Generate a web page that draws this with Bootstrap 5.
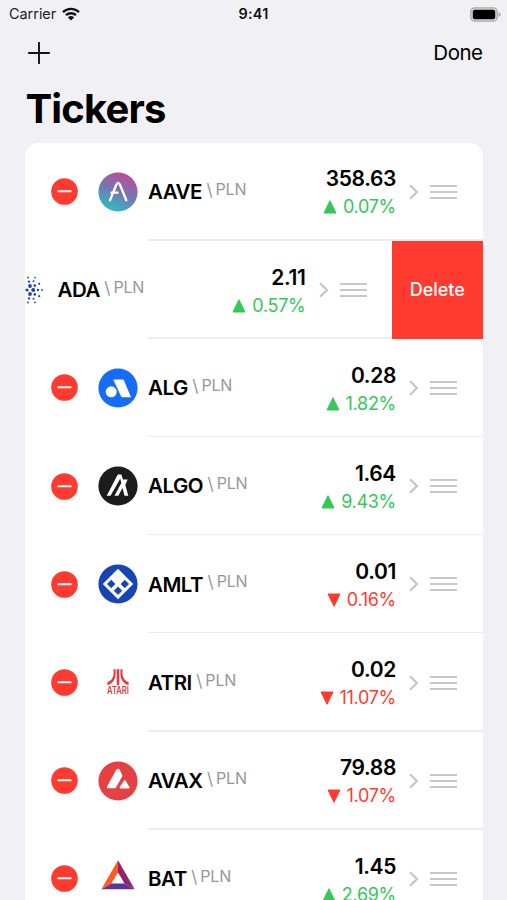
<!DOCTYPE html>
<html lang="en">
<head>
<meta charset="utf-8">
<meta name="viewport" content="width=device-width, initial-scale=1">
<title>Tickers</title>
<link href="https://cdn.jsdelivr.net/npm/bootstrap@5.3.0/dist/css/bootstrap.min.css" rel="stylesheet">
<style>
  body { background: #f1f0f5; font-family: Inter, "Liberation Sans", sans-serif; color: #000; height: 900px; }
  .status { height: 28px; padding: 0 6px 0 9px; font-size: 14.4px; color: #222; }
  .status > div { flex: 1 1 0; }
  .clock { font-weight: 600; color: #111; letter-spacing: .3px; margin-right: 3px; }
  .wifi { margin-left: 6px; }
  .tools { height: 50px; padding: 0 24.5px 0 28px; font-size: 20.5px; letter-spacing: -.5px; }
  .title { font-size: 40px; font-weight: 700; line-height: 48px; height: 64.5px; padding: 7px 0 0 25.5px; letter-spacing: -.85px; margin: 0; }
  .sheet { margin: 0 24.5px 0 25px; border-radius: 13px 13px 0 0; height: 757.5px; }
  .ticker { height: 98.2px; padding: 0 25.5px 0 26px; position: relative; }
  .ticker::after { content: ""; position: absolute; left: 123px; right: 0; bottom: 0; height: 1.4px; background: #ededef; }
  .swiped { padding: 0; }
  .swiped .slide { margin-left: -64.5px; width: 431.5px; flex: none; padding-right: 25.5px; }
  .ico-remove { width: 27px; height: 27px; margin-right: 20px; }
  .ico-coin { width: 40px; height: 40px; margin-right: 10px; }
  .code { font-size: 20.5px; font-weight: 600; line-height: 26px; letter-spacing: -.5px; padding-top: .5px; }
  .slash { font-size: 17px; line-height: 26px; color: #97979b; margin: -4px 0 0 4.5px; }
  .pair { font-size: 16px; line-height: 26px; color: #97979b; margin: -6px 0 0 3px; letter-spacing: -.2px; }
  .quote { padding-top: 3.5px; }
  .price { font-size: 21px; font-weight: 600; line-height: 28px; letter-spacing: -.35px; }
  .change { font-size: 18px; line-height: 28px; letter-spacing: -.3px; }
  .up { color: #34c759; } .down { color: #ff3b30; }
  .ico-tri { width: 14px; height: 14px; margin-right: 6px; }
  .ico-chev { width: 11px; height: 16px; margin: 0 11px 0 12px; }
  .ico-grip { width: 27px; height: 16px; }
  .swipe-delete { background: #ff3b30; color: #fff; width: 90.5px; font-size: 18px; font-weight: 500; border: 0; z-index: 1; }
  svg { flex: none; display: block; }
</style>
</head>
<body class="overflow-hidden">
<svg width="0" height="0" class="position-absolute">
  <defs>
    <linearGradient id="g" x1=".7" y1="0" x2=".3" y2="1"><stop offset=".08" stop-color="#b44f9b"/><stop offset=".5" stop-color="#7577b2"/><stop offset=".95" stop-color="#30b9c4"/></linearGradient>
    <symbol id="remove" viewBox="0 0 27 27"><circle cx="13.5" cy="13.5" r="13.3" fill="#ff3b30"/><path d="M7.2 13.3h12.6" stroke="#fff" stroke-width="2" stroke-linecap="round"/></symbol>
    <symbol id="up" viewBox="0 0 14 14"><path d="M7 .7 13 13H1z" fill="#34c759" stroke="#34c759" stroke-linejoin="round"/></symbol>
    <symbol id="down" viewBox="0 0 14 14"><path d="M7 13.3 13 1H1z" fill="#ff3b30" stroke="#ff3b30" stroke-linejoin="round"/></symbol>
    <symbol id="chev" viewBox="0 0 11 16"><path d="m2 1.3 7 6.7-7 6.7" fill="none" stroke="#c4c4c6" stroke-width="2.1"/></symbol>
    <symbol id="grip" viewBox="0 0 27 16"><path d="M0 2h27M0 8h27M0 14h27" stroke="#c8c8ca" stroke-width="1.9"/></symbol>
  </defs>
</svg>

<header>
  <div class="status d-flex align-items-center">
    <div class="d-flex align-items-center"><span>Carrier</span>
      <svg class="wifi" width="18" height="14" viewBox="0 0 18 14" fill="none" stroke="#111"><path d="M1 5.1a11.6 11.6 0 0 1 16 0M4 8.2a7.3 7.3 0 0 1 10 0" stroke-width="2.4"/><path d="M5.9 10.5a4.5 4.5 0 0 1 6.2 0L9 13.6z" fill="#111" stroke="none"/></svg>
    </div>
    <span class="clock">9:41</span>
    <div class="d-flex justify-content-end">
      <svg width="31" height="15" viewBox="0 0 31 15"><rect x=".8" y=".8" width="26.4" height="13.4" rx="4" fill="#d8d8da" stroke="#aaaaad" stroke-width="1.3"/><rect x="2.8" y="2.8" width="22.4" height="9.4" rx="2" fill="#000"/><path d="M28.5 5.2q2.2.6 2.2 2.3t-2.2 2.3z" fill="#aaaaad"/></svg>
    </div>
  </div>
  <div class="tools d-flex align-items-center justify-content-between">
    <svg width="22" height="22" viewBox="0 0 22 22"><path d="M11 .8v20.4M.8 11h20.4" stroke="#111" stroke-width="1.9" stroke-linecap="round"/></svg>
    <span>Done</span>
  </div>
  <h1 class="title">Tickers</h1>
</header>

<main class="sheet bg-white overflow-hidden">
  <div class="ticker d-flex align-items-center">
    <svg class="ico-remove"><use href="#remove"/></svg>
    <svg class="ico-coin" viewBox="0 0 40 40"><circle cx="20" cy="20" r="19.6" fill="url(#g)"/><path d="M12 28.3 18.3 12.8q1.9-4 3.7 0l6.3 15.5M13.4 20.7h6.2" fill="none" stroke="#fff" stroke-width="2.3" stroke-linecap="round"/></svg>
    <span class="code">AAVE</span><span class="slash">\</span><span class="pair">PLN</span>
    <div class="quote ms-auto"><div class="price text-end">358.63</div><div class="change up d-flex align-items-center justify-content-end"><svg class="ico-tri"><use href="#up"/></svg>0.07%</div></div>
    <svg class="ico-chev"><use href="#chev"/></svg><svg class="ico-grip"><use href="#grip"/></svg>
  </div>

  <div class="ticker swiped d-flex align-items-stretch">
    <div class="slide d-flex align-items-center">
      <svg class="ico-remove invisible"></svg>
      <svg class="ico-coin" viewBox="0 0 40 40" fill="#1d43b0"><circle cx="22" cy="16" r="1.9"/><circle cx="25.2" cy="20" r="2"/><circle cx="22" cy="24" r="1.9"/><circle cx="19" cy="20" r="1.6"/><circle cx="26.8" cy="15.6" r="1.3"/><circle cx="26.8" cy="24.4" r="1.3"/><circle cx="21" cy="11.6" r="1.2"/><circle cx="21" cy="28.4" r="1.2"/><circle cx="30" cy="20" r="1.2"/><circle cx="25.5" cy="11.2" r="1"/><circle cx="25.5" cy="28.8" r="1"/><circle cx="31.2" cy="13.8" r="1.1"/><circle cx="31.2" cy="26.2" r="1.1"/><circle cx="20" cy="7.5" r=".9"/><circle cx="20" cy="32.5" r=".9"/><circle cx="27" cy="7.6" r=".9"/><circle cx="27" cy="32.4" r=".9"/><circle cx="34" cy="20" r=".9"/></svg>
      <span class="code">ADA</span><span class="slash">\</span><span class="pair">PLN</span>
      <div class="quote ms-auto"><div class="price text-end">2.11</div><div class="change up d-flex align-items-center justify-content-end"><svg class="ico-tri"><use href="#up"/></svg>0.57%</div></div>
      <svg class="ico-chev"><use href="#chev"/></svg><svg class="ico-grip"><use href="#grip"/></svg>
    </div>
    <button class="swipe-delete ms-auto p-0">Delete</button>
  </div>

  <div class="ticker d-flex align-items-center">
    <svg class="ico-remove"><use href="#remove"/></svg>
    <svg class="ico-coin" viewBox="0 0 40 40"><circle cx="20" cy="20" r="19.6" fill="#176cf7"/><circle cx="13.2" cy="23.8" r="5.5" fill="#fff"/><path d="M15.2 11.5h9.3q1 0 1.5 1l7 16.7h-8.5q-1 0-1.5-1z" fill="#fff"/></svg>
    <span class="code">ALG</span><span class="slash">\</span><span class="pair">PLN</span>
    <div class="quote ms-auto"><div class="price text-end">0.28</div><div class="change up d-flex align-items-center justify-content-end"><svg class="ico-tri"><use href="#up"/></svg>1.82%</div></div>
    <svg class="ico-chev"><use href="#chev"/></svg><svg class="ico-grip"><use href="#grip"/></svg>
  </div>

  <div class="ticker d-flex align-items-center">
    <svg class="ico-remove"><use href="#remove"/></svg>
    <svg class="ico-coin" viewBox="0 0 40 40"><circle cx="20" cy="20" r="19.6" fill="#1c1c1d"/><path d="M8.7 29.8 19.8 8.5h3.6l1.5 5h4.7l-2.3 5.4 3 10.9h-3.8l-2-7.7-4.2 7.7h-3.8l6.8-12.7-1.1-4.3-9.7 17z" fill="#fff"/></svg>
    <span class="code">ALGO</span><span class="slash">\</span><span class="pair">PLN</span>
    <div class="quote ms-auto"><div class="price text-end">1.64</div><div class="change up d-flex align-items-center justify-content-end"><svg class="ico-tri"><use href="#up"/></svg>9.43%</div></div>
    <svg class="ico-chev"><use href="#chev"/></svg><svg class="ico-grip"><use href="#grip"/></svg>
  </div>

  <div class="ticker d-flex align-items-center">
    <svg class="ico-remove"><use href="#remove"/></svg>
    <svg class="ico-coin" viewBox="0 0 40 40"><circle cx="20" cy="20" r="19.6" fill="#1745b5"/><path d="M20 4.8 35.2 20 20 35.2 4.8 20z" fill="#fff"/><path d="m13.2 16.2 3.8 3.8-3.8 3.8-3.8-3.8zm13.6 0 3.8 3.8-3.8 3.8-3.8-3.8zM20 22.9l3.8 3.8-3.8 3.8-3.8-3.8z" fill="#1745b5" stroke="#1745b5" stroke-width=".8" stroke-linejoin="round"/></svg>
    <span class="code">AMLT</span><span class="slash">\</span><span class="pair">PLN</span>
    <div class="quote ms-auto"><div class="price text-end">0.01</div><div class="change down d-flex align-items-center justify-content-end"><svg class="ico-tri"><use href="#down"/></svg>0.16%</div></div>
    <svg class="ico-chev"><use href="#chev"/></svg><svg class="ico-grip"><use href="#grip"/></svg>
  </div>

  <div class="ticker d-flex align-items-center">
    <svg class="ico-remove"><use href="#remove"/></svg>
    <svg class="ico-coin" viewBox="0 0 40 40"><path d="M18.7 6.3h2.6v16h-2.6zM15.6 6.3h2v4.2q0 9-8.2 11.8v-3q6.2-2.5 6.2-9zM24.4 6.3h-2v4.2q0 9 8.2 11.8v-3q-6.2-2.5-6.2-9z" fill="#e0393f"/><text x="20" y="31" text-anchor="middle" textLength="22" lengthAdjust="spacingAndGlyphs" font-size="10" font-weight="600" fill="#e0393f">ATARI</text></svg>
    <span class="code">ATRI</span><span class="slash">\</span><span class="pair">PLN</span>
    <div class="quote ms-auto"><div class="price text-end">0.02</div><div class="change down d-flex align-items-center justify-content-end"><svg class="ico-tri"><use href="#down"/></svg>11.07%</div></div>
    <svg class="ico-chev"><use href="#chev"/></svg><svg class="ico-grip"><use href="#grip"/></svg>
  </div>

  <div class="ticker d-flex align-items-center">
    <svg class="ico-remove"><use href="#remove"/></svg>
    <svg class="ico-coin" viewBox="0 0 40 40"><circle cx="20" cy="20" r="19.6" fill="#e54143"/><path d="M19.3 8.9 9.8 26.3h7.1l6.5-11.4-2.6-6zM26.8 20.2l-4.2 6.4h8z" fill="#fff" stroke="#fff" stroke-width="2" stroke-linejoin="round"/></svg>
    <span class="code">AVAX</span><span class="slash">\</span><span class="pair">PLN</span>
    <div class="quote ms-auto"><div class="price text-end">79.88</div><div class="change down d-flex align-items-center justify-content-end"><svg class="ico-tri"><use href="#down"/></svg>1.07%</div></div>
    <svg class="ico-chev"><use href="#chev"/></svg><svg class="ico-grip"><use href="#grip"/></svg>
  </div>

  <div class="ticker d-flex align-items-center">
    <svg class="ico-remove"><use href="#remove"/></svg>
    <svg class="ico-coin" viewBox="0 0 40 40"><path d="M20 1.3 3.4 30.2l10.1-5.7L20 13.2z" fill="#ff5a20"/><path d="m20 1.3 16.7 28.9-10.2-5.7L20 13.2z" fill="#94216e"/><path d="M3.4 30.2h33.3l-10.2-5.7h-13z" fill="#5b3599"/></svg>
    <span class="code">BAT</span><span class="slash">\</span><span class="pair">PLN</span>
    <div class="quote ms-auto"><div class="price text-end">1.45</div><div class="change up d-flex align-items-center justify-content-end"><svg class="ico-tri"><use href="#up"/></svg>2.69%</div></div>
    <svg class="ico-chev"><use href="#chev"/></svg><svg class="ico-grip"><use href="#grip"/></svg>
  </div>
</main>
<script src="https://cdn.jsdelivr.net/npm/bootstrap@5.3.0/dist/js/bootstrap.bundle.min.js"></script>
</body>
</html>
